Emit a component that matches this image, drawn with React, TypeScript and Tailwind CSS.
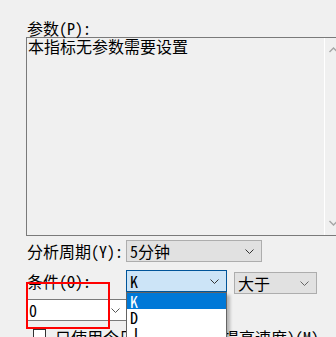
import type { ReactNode } from 'react'

function Chevron({ className }: { className: string }) {
  return (
    <svg className={className} width="9" height="5" viewBox="0 0 9 5" fill="none">
      <path d="M0.5 0.5 L4.5 4.5 L8.5 0.5" stroke="currentColor" strokeWidth="1" />
    </svg>
  )
}

function Select({ className, children, arrow }: { className: string; children: ReactNode; arrow: string }) {
  return (
    <div className={`flex h-[22px] shrink-0 items-center justify-between border pl-[3px] pr-[7px] ${className}`}>
      <span className="leading-[16px]">{children}</span>
      <Chevron className={arrow} />
    </div>
  )
}

export default function App() {
  const options = ['K', 'D', 'J']

  return (
    <div
      className="relative h-[337px] w-[336px] overflow-hidden bg-[#f0f0f0] pl-[26px] pt-[20px] text-[16px] text-black [font-feature-settings:'hwid']"
      style={{ fontFamily: '"Noto Sans CJK SC", sans-serif' }}
    >
      <div className="pl-px leading-[16px]">参数(P):</div>

      <div className="mt-px flex h-[199px] w-[316px] border border-[#7a7a7a] bg-[#f0f0f0]">
        <div className="flex-1 pl-[1px] leading-[16px]">本指标无参数需要设置</div>
        <div className="flex w-[17px] flex-col items-center justify-between border-l border-white py-[9px]">
          <svg width="9" height="6" viewBox="0 0 9 6" fill="none" className="text-[#a6a6a6]">
            <path d="M0.5 5 L4.5 1 L8.5 5" stroke="currentColor" strokeWidth="1.4" />
          </svg>
          <svg width="9" height="6" viewBox="0 0 9 6" fill="none" className="text-[#a6a6a6]">
            <path d="M0.5 1 L4.5 5 L8.5 1" stroke="currentColor" strokeWidth="1.4" />
          </svg>
        </div>
      </div>

      <div className="mt-[4px] flex items-center">
        <div className="w-[100px] shrink-0 pl-px leading-[16px]">分析周期(Y):</div>
        <Select className="w-[136px] border-[#adadad] bg-[#e1e1e1]" arrow="text-[#333]">
          5分钟
        </Select>
      </div>

      <div className="mt-[8px] flex items-start">
        <div className="mt-[3px] w-[100px] shrink-0 pl-px leading-[16px]">条件(O):</div>
        <Select className="w-[101px] border-[#005499] bg-[#cce4f7]" arrow="text-[#333]">
          K
        </Select>
        <Select className="ml-[7px] mt-[2px] w-[83px] border-[#adadad] bg-[#e1e1e1]" arrow="text-[#666]">
          大于
        </Select>
      </div>

      <div className="mt-[5px] flex h-[22px] w-[104px] items-center justify-between border border-[#7a7a7a] bg-white pl-[2px] pr-[7px]">
        <span className="leading-[16px]">0</span>
        <Chevron className="mr-[2px] text-[#555]" />
      </div>

      <div className="mt-[8px] flex items-start pl-[7px]">
        <div className="h-[13px] w-[13px] shrink-0 border border-[#333] bg-white" />
        <div className="ml-[9px] leading-[16px]">只使用今日数据计算(可提高速度)(M)</div>
      </div>

      <div className="absolute left-[126px] top-[292px] w-[101px] border border-[#646464] bg-white shadow-[3px_3px_3px_rgba(0,0,0,0.25)]">
        {options.map((opt, i) => (
          <div
            key={opt}
            className={`h-[16px] pl-[3px] leading-[16px] ${i === 0 ? 'bg-[#0078d7] text-white' : ''}`}
          >
            {opt}
          </div>
        ))}
      </div>

      <div className="absolute left-[26px] top-[282px] h-[47px] w-[84px] border-2 border-[#ff0000]" />
    </div>
  )
}
